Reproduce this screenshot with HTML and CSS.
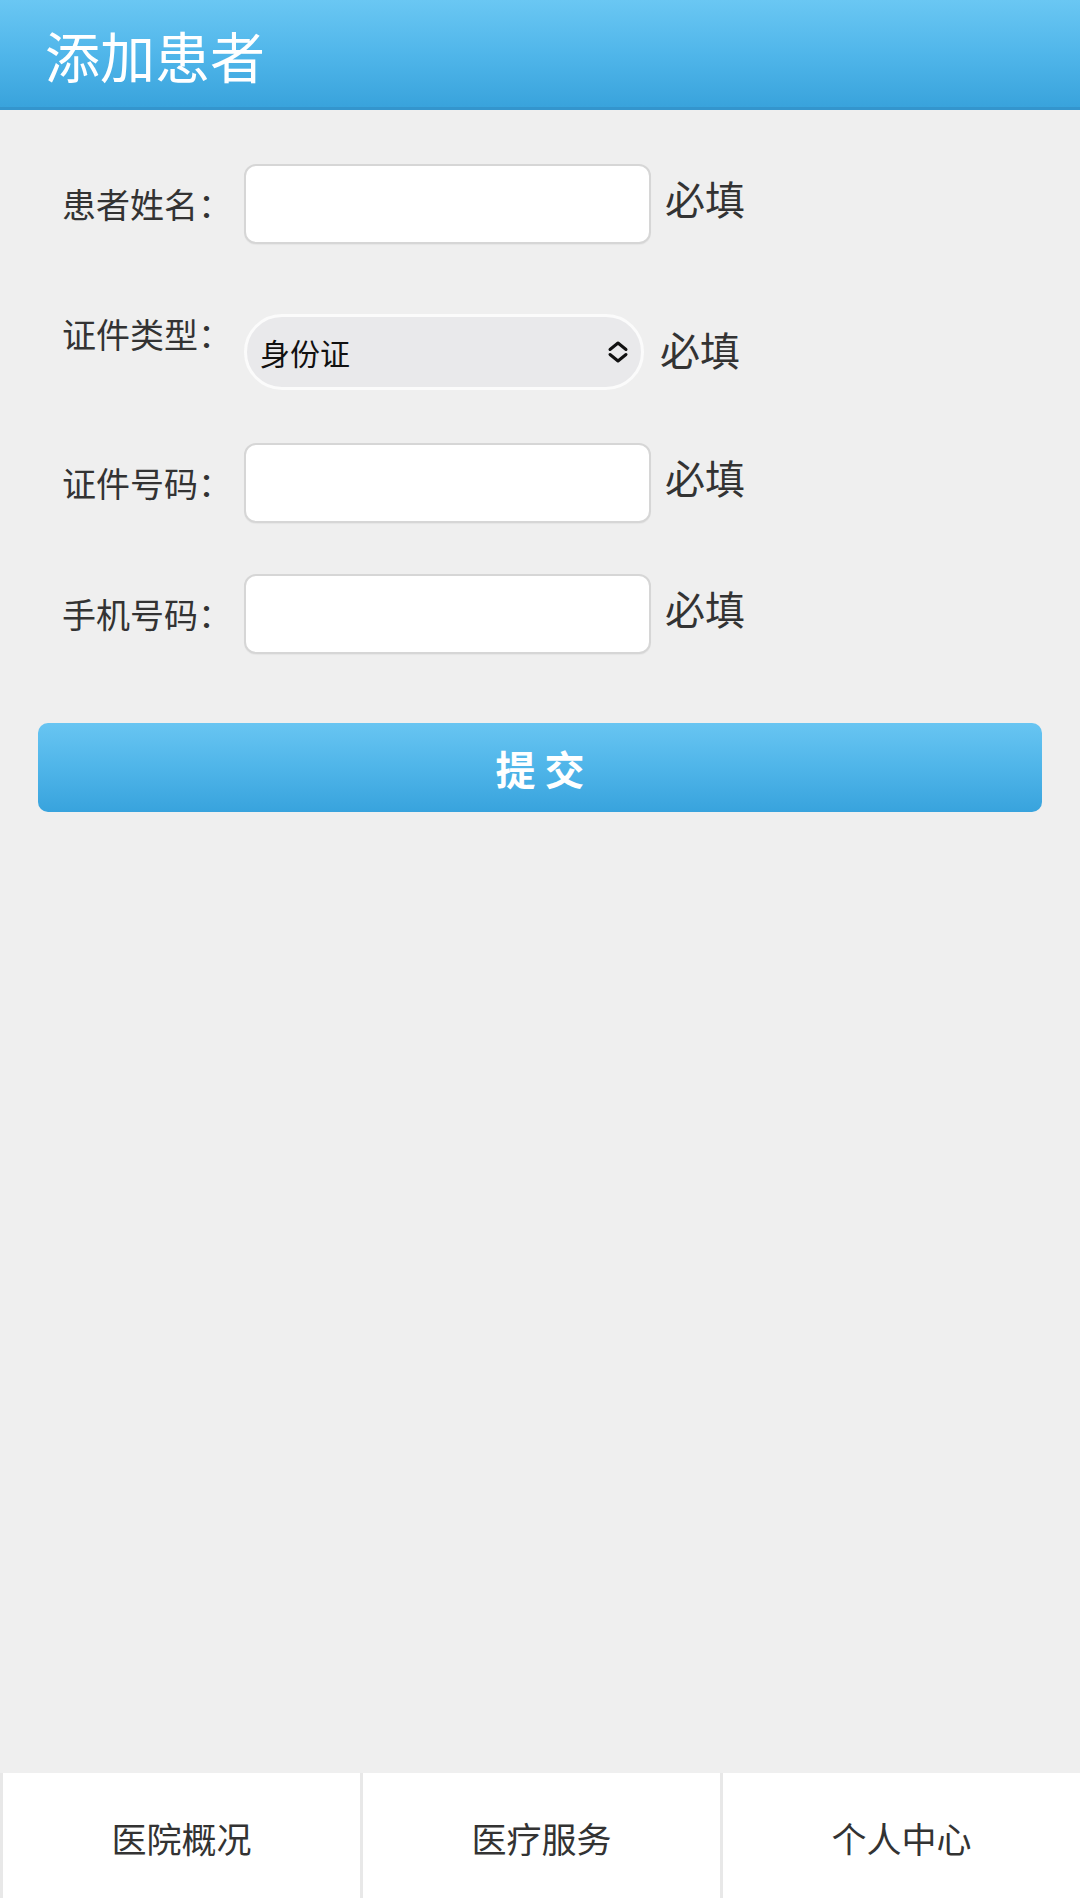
FILE: index.html
```html
<!DOCTYPE html>
<html lang="zh-CN">
<head>
<meta charset="utf-8">
<title>添加患者</title>
<link rel="stylesheet" href="styles.css">
</head>
<body>
<div class="page">
  <header class="topbar">
    <h1 class="title">添加患者</h1>
  </header>
  <main class="content">
    <form class="form">
      <div class="row row-first">
        <label class="label">患者姓名：</label>
        <input class="field" type="text">
        <span class="req">必填</span>
      </div>
      <div class="row row-select">
        <label class="label label-top">证件类型：</label>
        <div class="select">
          <span class="select-text">身份证</span>
          <svg class="chev" viewBox="0 0 22 22" width="22" height="22" aria-hidden="true">
            <path d="M3 8.5 L11 2 L19 8.5" fill="none" stroke="#111" stroke-width="3" stroke-linecap="round" stroke-linejoin="round"/>
            <path d="M3 13.5 L11 20 L19 13.5" fill="none" stroke="#111" stroke-width="3" stroke-linecap="round" stroke-linejoin="round"/>
          </svg>
        </div>
        <span class="req">必填</span>
      </div>
      <div class="row">
        <label class="label">证件号码：</label>
        <input class="field" type="text">
        <span class="req">必填</span>
      </div>
      <div class="row row-last">
        <label class="label">手机号码：</label>
        <input class="field" type="text">
        <span class="req">必填</span>
      </div>
      <button class="submit" type="button">提 交</button>
    </form>
  </main>
  <nav class="tabbar">
    <a class="tab">医院概况</a>
    <a class="tab">医疗服务</a>
    <a class="tab">个人中心</a>
  </nav>
</div>
</body>
</html>
```

FILE: styles.css
```css
* {
  box-sizing: border-box;
}

html, body {
  margin: 0;
  padding: 0;
  background: #efefef;
}

body {
  font-family: "Noto Sans CJK SC", "Noto Sans", sans-serif;
  color: #333;
}

.page {
  display: flex;
  flex-direction: column;
  height: 1898px;
}

.topbar {
  height: 110px;
  flex: 0 0 110px;
  display: flex;
  align-items: center;
  padding-left: 45px;
  background: linear-gradient(to bottom, #6ac7f3 0%, #50b6ea 50%, #39a3dc 100%);
  border-bottom: 3px solid #3495cd;
}

.title {
  margin: 0;
  font-size: 55px;
  font-weight: 400;
  line-height: 1;
  color: #fff;
  padding-top: 2px;
}

.content {
  flex: 1;
}

.form {
  padding-top: 54px;
  display: flex;
  flex-direction: column;
}

.row {
  display: flex;
  align-items: center;
  padding-left: 62px;
  margin-top: 53px;
  height: 80px;
}

.row-first {
  margin-top: 0;
}

.row-last {
  margin-top: 51px;
}

.row-select {
  margin-top: 70px;
  height: 76px;
}

.label {
  width: 182px;
  flex: 0 0 182px;
  font-size: 34px;
  line-height: 1;
  color: #333;
  white-space: nowrap;
}

.label-top {
  align-self: flex-start;
  margin-top: 3px;
}

.field {
  width: 407px;
  height: 80px;
  margin: 0;
  border: 2px solid #d6d6d6;
  border-radius: 12px;
  background: #fff;
  font-size: 30px;
  box-shadow: 0 1px 1px rgba(0, 0, 0, 0.04);
}

.select {
  width: 400px;
  height: 76px;
  border: 3px solid #fbfbfb;
  border-radius: 38px;
  background: #e9e9eb;
  display: flex;
  align-items: center;
  justify-content: space-between;
  padding: 0 12px 0 13px;
}

.select-text {
  font-size: 30px;
  line-height: 1;
  color: #111;
}

.chev {
  display: block;
  width: 22px;
  height: 22px;
}

.req {
  margin-left: 14px;
  margin-bottom: 12px;
  font-size: 40px;
  line-height: 1;
  color: #333;
}

.row-select .req {
  margin-left: 16px;
  margin-bottom: 6px;
}

.submit {
  margin: 69px 38px 0;
  height: 89px;
  border: none;
  border-radius: 10px;
  background: linear-gradient(to bottom, #68c5f2 0%, #4fb5e9 50%, #38a3dd 100%);
  color: #fff;
  font-family: "Noto Sans CJK SC", "Noto Sans", sans-serif;
  font-size: 40px;
  font-weight: 700;
  line-height: 1;
  padding: 0;
}

.tabbar {
  flex: 0 0 125px;
  height: 125px;
  display: grid;
  grid-template-columns: 1fr 1fr 1fr;
  column-gap: 3px;
  padding-left: 3px;
  background: #e8e8e8;
}

.tab {
  background: #fff;
  display: flex;
  align-items: center;
  justify-content: center;
  font-size: 35px;
  color: #333;
  padding-top: 4px;
}
```
